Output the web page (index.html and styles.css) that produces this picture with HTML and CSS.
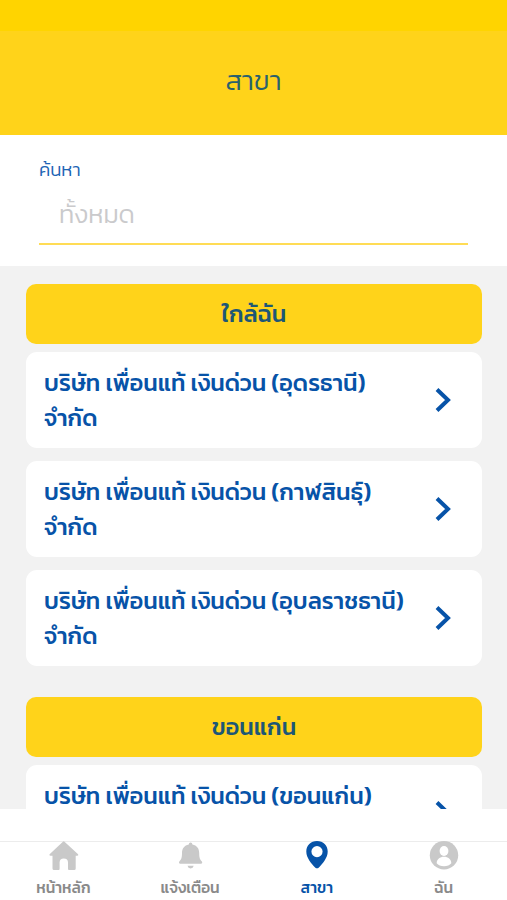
FILE: index.html
```html
<!DOCTYPE html>
<html lang="th">
<head>
<meta charset="utf-8">
<title>สาขา</title>
<link rel="stylesheet" href="styles.css">
</head>
<body>
<div class="app">
  <header class="header"><div class="status"></div><h1>สาขา</h1></header>
  <section class="search">
    <div class="label">ค้นหา</div>
    <div class="field">ทั้งหมด</div>
  </section>
  <main class="list">
    <section class="group">
      <h2>ใกล้ฉัน</h2>
      <div class="card"><p>บริษัท เพื่อนแท้ เงินด่วน (อุดรธานี)<br>จำกัด</p><svg class="chevron" viewBox="0 0 16 26"><path d="M2 2.500 13 13 2 23.500"/></svg></div>
      <div class="card"><p>บริษัท เพื่อนแท้ เงินด่วน (กาฬสินธุ์)<br>จำกัด</p><svg class="chevron" viewBox="0 0 16 26"><path d="M2 2.500 13 13 2 23.500"/></svg></div>
      <div class="card"><p>บริษัท เพื่อนแท้ เงินด่วน (อุบลราชธานี)<br>จำกัด</p><svg class="chevron" viewBox="0 0 16 26"><path d="M2 2.500 13 13 2 23.500"/></svg></div>
    </section>
    <section class="group">
      <h2>ขอนแก่น</h2>
      <div class="card"><p>บริษัท เพื่อนแท้ เงินด่วน (ขอนแก่น)</p><svg class="chevron" viewBox="0 0 16 26"><path d="M2 2.500 13 13 2 23.500"/></svg></div>
    </section>
  </main>
  <nav class="tabs">
    <a class="tab"><svg viewBox="0 0 30 30"><path d="M14.900-.3Q15.700-1.100 16.500-.3L30.100 12.200q.8 1.400-.8 1.600H27.700V26.500q0 1.500-1.500 1.500H21q-1 0-1-1V20.500q0-4-4.200-4t-4.200 4V27q0 1-1 1H6q-1.500 0-1.500-1.500V13.800H2.400Q.8 13.600 1.600 12.200z"/></svg><span>หน้าหลัก</span></a>
    <a class="tab"><svg viewBox="0 0 30 30"><path d="M13.800 2.500Q13.800.5 15.600.5t1.800 2c4.500 1 6.800 4 6.800 8.500 0 5 .8 6.500 2.700 8.500q1 2-1 2.300H5.300q-2-.3-1-2.300C6.200 17.500 7 16 7 11c0-4.500 2.300-7.500 6.800-8.500zM12.500 23.800h6.200q-.5 2.600-3.100 2.600t-3.100-2.600z"/></svg><span>แจ้งเตือน</span></a>
    <a class="tab active"><svg viewBox="0 0 30 30"><path fill-rule="evenodd" d="M15-1C8.700-1 4.300 3.500 4.300 9.500c0 6.500 5.200 12 8.800 16q1.900 1.700 3.800 0c3.600-4 8.800-9.500 8.800-16C25.700 3.500 21.300-1 15-1zm0 5a5.600 5.600 0 1 1 0 11.200A5.600 5.600 0 0 1 15 4z"/></svg><span>สาขา</span></a>
    <a class="tab"><svg viewBox="0 0 30 30"><circle cx="15" cy="13.200" r="14.200"/><ellipse class="cut" cx="15" cy="9" rx="4.400" ry="4.900"/><path class="cut" d="M7.700 21.200c0-4 3.300-6.500 7.300-6.500s7.300 2.500 7.300 6.500c-1.500 2-4.200 3-7.300 3s-5.800-1-7.300-3z"/></svg><span>ฉัน</span></a>
  </nav>
</div>
</body>
</html>
```
FILE: styles.css
```css
* { box-sizing: border-box; }
body { margin: 0; background: #fff; color: #0753a8; font-family: Kanit, Prompt, sans-serif; }
.app { height: 900px; display: flex; flex-direction: column; overflow: hidden; }
h1, h2, p { margin: 0; }
.header { height: 135px; background: #ffd31a; flex: none; }
.status { height: 31px; background: #ffd400; }
h1 { font-size: 27.500px; line-height: 40px; font-weight: 300; text-align: center; padding-top: 30px; color: #2a616d; }
.search { height: 130.500px; flex: none; padding: 21px 39px 20px; }
.label { font-size: 18.600px; line-height: 27px; font-weight: 300; color: #1e65b5; }
.field { height: 62px; border-bottom: 2px solid #ffdc55; padding: 12px 20px; font-size: 25.500px; line-height: 38px; font-weight: 300; color: #cacacc; }
.list { height: 543.500px; flex: none; overflow: hidden; background: #f2f2f2; padding: 18px 25px 0 26px; }
.group { margin-bottom: 30.500px; }
h2 { height: 60.500px; border-radius: 10px; background: #ffd31a; font-size: 23.500px; line-height: 60px; font-weight: 500; text-align: center; margin-bottom: 8px; color: #1d5776; }
.card { height: 96px; border-radius: 11px; background: #fff; padding: 13px 31px 0 18px; display: flex; justify-content: space-between; margin-bottom: 13px; }
.card p { font-size: 23.500px; line-height: 35px; font-weight: 500; white-space: nowrap; }
.chevron { width: 16px; height: 26px; margin-top: 22px; fill: none; stroke: #0753a8; stroke-width: 4; flex: none; }
.tabs { margin-top: 32px; height: 59px; border-top: 1px solid #ececec; display: grid; grid-template-columns: repeat(4, 1fr); }
.tab { display: flex; flex-direction: column; align-items: center; color: #8a8a8a; font-size: 15.500px; line-height: 24px; font-weight: 500; }
.tab svg { width: 30px; height: 30px; fill: #c9c9c9; margin-bottom: 4px; overflow: visible; }
.tab.active { color: #0753a8; }
.tab.active svg { fill: #0753a8; }
.tab .cut { fill: #fff; }
```
